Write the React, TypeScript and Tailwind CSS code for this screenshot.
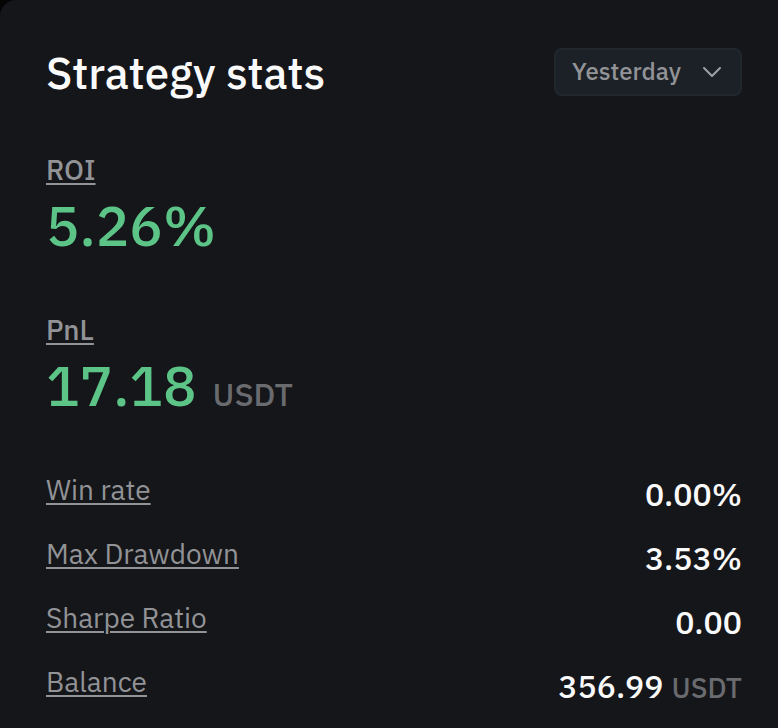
import { ChevronDown } from "lucide-react";

const stats = [
  { label: "Win rate", value: "0.00%" },
  { label: "Max Drawdown", value: "3.53%" },
  { label: "Sharpe Ratio", value: "0.00" },
  { label: "Balance", value: "356.99", unit: "USDT" },
];

const underlined = "underline decoration-2 underline-offset-3";

export default function App() {
  return (
    <div className="min-h-screen bg-[#050506] font-['IBM_Plex_Sans','Noto_Sans',sans-serif] antialiased">
      <main className="min-h-screen rounded-tl-2xl bg-[#15161a] pt-12 pr-9 pl-[46px]">
        <header className="flex items-start justify-between">
          <h1 className="text-[44px] leading-[50px] font-medium text-[#fafafa]">Strategy stats</h1>
          <div className="relative">
            <select
              aria-label="Period"
              defaultValue="Yesterday"
              className="h-12 w-[188px] appearance-none rounded-lg border-2 border-[#20282e] bg-[#1c2127] pb-0.5 pl-4 text-2xl leading-8 font-medium text-[#929396] outline-none"
            >
              <option>Yesterday</option>
              <option>7 days</option>
              <option>30 days</option>
            </select>
            <ChevronDown
              aria-hidden="true"
              className="pointer-events-none absolute top-2 right-3.5 h-8 w-8 text-[#a0a1a3]"
              strokeWidth={1.5}
            />
          </div>
        </header>

        <dl>
          <dt className={`mt-14 text-[28px] leading-8 font-medium text-[#929396] ${underlined}`}>ROI</dt>
          <dd className="mt-1.5 text-[56px] leading-[66px] font-medium text-[#5dc487]">5.26%</dd>
          <dt className={`mt-14 text-[28px] leading-8 font-medium text-[#929396] ${underlined}`}>PnL</dt>
          <dd className="mt-1.5 flex items-baseline gap-4 text-[56px] leading-[66px] font-medium text-[#5dc487]">
            17.18
            <span className="text-[32px] text-[#6a6b6f]">USDT</span>
          </dd>
        </dl>

        <dl className="mt-[39px]">
          {stats.map(({ label, value, unit }) => (
            <div key={label} className="flex h-16 items-start justify-between">
              <dt className={`mt-2 text-[28px] leading-8 text-[#929396] ${underlined}`}>{label}</dt>
              <dd className="mt-3 flex items-baseline gap-2 text-[32px] leading-8 font-medium text-[#fafafa]">
                {value}
                {unit && <span className="text-[28px] text-[#6a6b6f]">{unit}</span>}
              </dd>
            </div>
          ))}
        </dl>
      </main>
    </div>
  );
}
